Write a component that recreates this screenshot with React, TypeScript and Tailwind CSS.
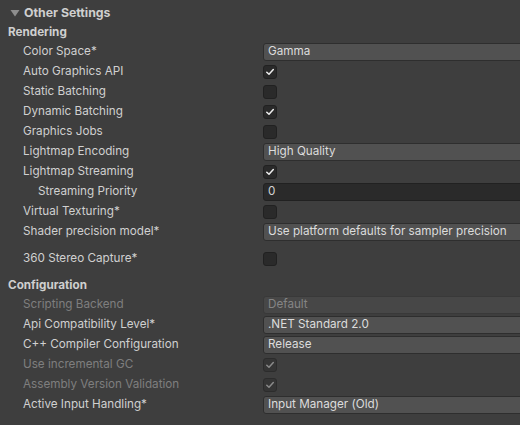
import React from 'react';

type Row =
  | { kind: 'dropdown'; label: string; value: string; indent?: boolean; disabled?: boolean }
  | { kind: 'check'; label: string; checked: boolean; disabled?: boolean }
  | { kind: 'int'; label: string; value: string; indent?: boolean };

const rendering: Row[] = [
  { kind: 'dropdown', label: 'Color Space*', value: 'Gamma' },
  { kind: 'check', label: 'Auto Graphics API', checked: true },
  { kind: 'check', label: 'Static Batching', checked: false },
  { kind: 'check', label: 'Dynamic Batching', checked: true },
  { kind: 'check', label: 'Graphics Jobs', checked: false },
  { kind: 'dropdown', label: 'Lightmap Encoding', value: 'High Quality' },
  { kind: 'check', label: 'Lightmap Streaming', checked: true },
  { kind: 'int', label: 'Streaming Priority', value: '0', indent: true },
  { kind: 'check', label: 'Virtual Texturing*', checked: false },
  { kind: 'dropdown', label: 'Shader precision model*', value: 'Use platform defaults for sampler precision' },
];

const configuration: Row[] = [
  { kind: 'dropdown', label: 'Scripting Backend', value: 'Default', disabled: true },
  { kind: 'dropdown', label: 'Api Compatibility Level*', value: '.NET Standard 2.0' },
  { kind: 'dropdown', label: 'C++ Compiler Configuration', value: 'Release' },
  { kind: 'check', label: 'Use incremental GC', checked: true, disabled: true },
  { kind: 'check', label: 'Assembly Version Validation', checked: true, disabled: true },
  { kind: 'dropdown', label: 'Active Input Handling*', value: 'Input Manager (Old)' },
];

function Check({ checked, disabled }: { checked: boolean; disabled?: boolean }) {
  return (
    <div
      className={`w-[14px] h-[14px] shrink-0 rounded-[3px] border flex items-center justify-center ${
        disabled ? 'bg-[#353535] border-[#2c2c2c]' : 'bg-[#2a2a2a] border-[#212121]'
      }`}
    >
      {checked && (
        <svg width="10" height="10" viewBox="0 0 10 10" fill="none">
          <path
            d="M1.8 5.2 L4 7.3 L8.3 2.6"
            stroke={disabled ? '#8a8a8a' : '#eeeeee'}
            strokeWidth="1.5"
            strokeLinecap="round"
            strokeLinejoin="round"
          />
        </svg>
      )}
    </div>
  );
}

function Field({ row }: { row: Row }) {
  if (row.kind === 'check') return <Check checked={row.checked} disabled={row.disabled} />;
  if (row.kind === 'int')
    return (
      <div className="h-[18px] w-[300px] shrink-0 rounded-[3px] bg-[#2a2a2a] border border-[#212121] pl-[4px] flex items-center text-[#d2d2d2]">
        {row.value}
      </div>
    );
  return (
    <div
      className={`h-[18px] w-[300px] shrink-0 rounded-[3px] border pl-[4px] flex items-center ${
        row.disabled
          ? 'bg-[#474747] border-[#393939] text-[#858585]'
          : 'bg-[#515151] border-[#2e2e2e] text-[#dcdcdc]'
      }`}
    >
      {row.value}
    </div>
  );
}

function SettingRow({ row }: { row: Row }) {
  const indent = row.kind !== 'check' && row.indent;
  return (
    <div className="h-[20px] flex items-center">
      <div
        className={`w-[263px] shrink-0 ${indent ? 'pl-[38px]' : 'pl-[23px]'} ${
          row.disabled ? 'text-[#7e7e7e]' : 'text-[#d0d0d0]'
        }`}
      >
        {row.label}
      </div>
      <Field row={row} />
    </div>
  );
}

export default function App() {
  return (
    <div
      className="w-[520px] h-[425px] overflow-hidden bg-[#3e3e3e] text-[11.7px] pt-[3px]"
      style={{ fontFamily: 'Inter, "Noto Sans", sans-serif' }}
    >
      <div className="h-[20px] flex items-center pl-[10px] gap-[4px]">
        <svg width="10" height="8" viewBox="0 0 10 8">
          <path d="M0.5 1 L9.5 1 L5 7.5 Z" fill="#8e8e8e" />
        </svg>
        <span className="font-bold text-[#cfcfcf] text-[12.3px]">Other Settings</span>
      </div>
      <div className="h-[19px] flex items-center pl-[8px] font-bold text-[#cfcfcf]">Rendering</div>
      {rendering.map((r) => (
        <SettingRow key={r.label} row={r} />
      ))}
      <div className="mt-[7px]">
        <SettingRow row={{ kind: 'check', label: '360 Stereo Capture*', checked: false }} />
      </div>
      <div className="mt-[8px] h-[18px] flex items-center pl-[8px] font-bold text-[#cfcfcf]">Configuration</div>
      {configuration.map((r) => (
        <SettingRow key={r.label} row={r} />
      ))}
    </div>
  );
}
